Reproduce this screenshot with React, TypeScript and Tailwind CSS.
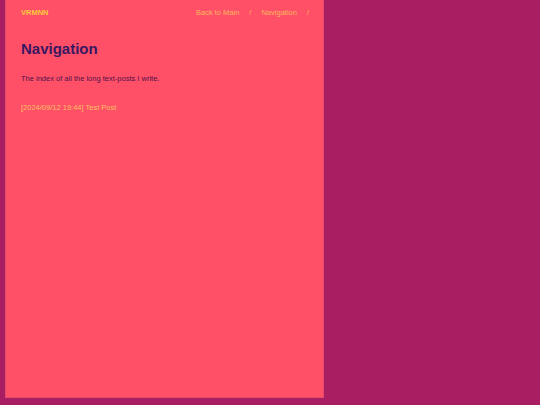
import React from 'react';

const posts = [{ date: '2024/09/12 19:44', title: 'Test Post' }];

export default function App() {
  return (
    <div className="min-h-screen w-full bg-[#a91d63] pl-[5px] font-['Liberation_Sans',Arial,sans-serif]">
      <div className="w-[319px] h-[398px] bg-[#ff5068] border border-t-0 border-[#e44a6c] px-[15px]">
        <header className="flex items-center justify-between h-[25px] text-[7.5px]">
          <a className="font-bold text-[#ffc93c]">VRMNN</a>
          <nav className="flex items-center gap-[10px] -mr-[1px] text-[#ffb65a]">
            <a>Back to Main</a>
            <span>/</span>
            <a>Navigation</a>
            <span>/</span>
          </nav>
        </header>
        <h1 className="mt-[14px] text-[15px] leading-[20px] font-bold text-[#3a1761]">Navigation</h1>
        <p className="mt-[15px] text-[7.5px] leading-[10px] text-[#4f1349]">
          The index of all the long text-posts I write.
        </p>
        <ul className="mt-[19px] text-[7.5px] leading-[10px] text-[#ffc060]">
          {posts.map((p) => (
            <li key={p.date}>
              <a>[{p.date}] {p.title}</a>
            </li>
          ))}
        </ul>
      </div>
    </div>
  );
}
